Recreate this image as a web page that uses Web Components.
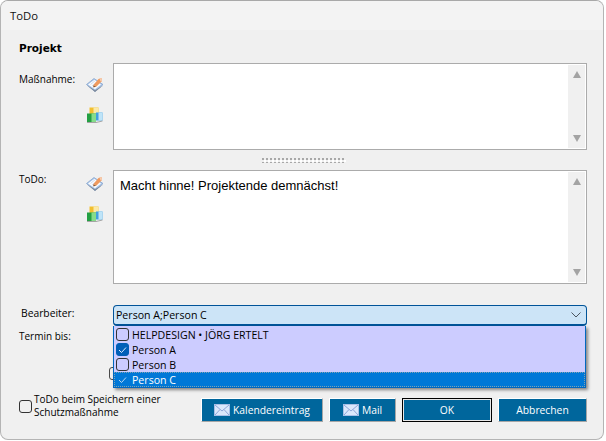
<!DOCTYPE html>
<html lang="de"><head><meta charset="utf-8"><title>ToDo</title>
<style>
html,body{margin:0;padding:0;background:#fff;}
body{font-family:"Open Sans","Noto Sans",sans-serif;}
</style></head>
<body>
<todo-window></todo-window>
<template id="t-icon-pen">
<svg width="20" height="18" viewBox="0 0 20 18"><path d="M1.500 9.500 9 3.500 18 9.500 10 16.500Z" fill="#a9c6ea" stroke="#7f9ec8" stroke-width=".7"/><path d="M3 9.500 9.500 4.800 16 9.500 10 14.300Z" fill="#fbfcfe"/><path d="M5.500 9.500 11 5M7 11 12 7" stroke="#c4d3e8" stroke-width=".8"/><path d="M8 10.500 13.500 4 16.500 3 17 6 11.500 11.500Z" fill="#ef9a5f"/><path d="M14.500 3.600 16.500 3 17 6 15.500 6.500Z" fill="#f8cdb0"/><path d="M8 10.500 11.500 11.500 8.500 12.500Z" fill="#8a5a3a"/><path d="M1.500 10 10 17 18.500 10.300 10 15.300Z" fill="#7f8c9e"/></svg>
</template>
<template id="t-icon-blocks">
<svg width="19" height="17" viewBox="0 0 19 17"><rect x="4.500" y="0.500" width="9" height="7" fill="#f2bf2e"/><rect x="8.500" y="0.500" width="5" height="7" fill="#fbe9a8"/><rect x="2" y="6.500" width="9" height="8.500" fill="#23a043"/><rect x="6.500" y="6.500" width="4.500" height="8.500" fill="#86dc8a"/><rect x="11" y="5.500" width="6.500" height="8" fill="#3f9fe0"/><rect x="13.500" y="5.500" width="4" height="8" fill="#bfe4f8"/><path d="M2 15.500H11L17.500 14" fill="none" stroke="#666" stroke-width="1" opacity=".55"/></svg>
</template>
<template id="t-mail">
<svg width="16" height="12" viewBox="0 0 16 12"><rect x=".5" y=".5" width="15" height="11" fill="#dbe7fb" stroke="#a9bfe6"/><path d="M1 1 8 7 15 1M1 11 6 5.500M15 11 10 5.500" fill="none" stroke="#8ea6d8"/></svg>
</template>
<script>
const css = s => `<style>${s}</style>`;

class MemoBox extends HTMLElement{
  connectedCallback(){
    this.attachShadow({mode:'open'}).innerHTML = css(`
      :host{display:flex;box-sizing:border-box;border:1px solid #ababab;background:#fff;height:var(--h);padding-right:1px;}
      .txt{flex:1;padding:6px 6px;font:13px/18px "Liberation Sans",Arial,sans-serif;color:#000;}
      .bar{width:17px;margin:1px 0;background:#f0f0f0;display:flex;flex-direction:column;justify-content:space-between;align-items:center;padding:6px 0;box-sizing:border-box;}
      .up,.dn{width:0;height:0;border-left:4.500px solid transparent;border-right:4.500px solid transparent;}
      .up{border-bottom:7px solid #a3a3a3;}
      .dn{border-top:7px solid #a3a3a3;}
    `)+`<div class="txt"><slot></slot></div><div class="bar"><span class="up"></span><span class="dn"></span></div>`;
  }
}
class FieldRow extends HTMLElement{
  connectedCallback(){
    const h=this.getAttribute('h'), lt=this.getAttribute('label-top'), it=this.getAttribute('icon-top');
    this.attachShadow({mode:'open'}).innerHTML = css(`
      :host{display:grid;grid-template-columns:66px 28px 474px;}
      .lbl{font-size:10px;line-height:15px;color:#000;padding-top:${lt}px;}
      .icons{display:flex;flex-direction:column;gap:14px;padding-top:${it}px;align-items:flex-start;}
      .icons svg{display:block;}
    `)+`<div class="lbl">${this.getAttribute('label')}</div>
    <div class="icons"></div>
    <memo-box style="--h:${h}px"><slot></slot></memo-box>`;
    const ic=this.shadowRoot.querySelector('.icons');
    ic.append(document.getElementById('t-icon-pen').content.cloneNode(true));
    ic.append(document.getElementById('t-icon-blocks').content.cloneNode(true));
  }
}
class SplitGrip extends HTMLElement{
  connectedCallback(){
    this.attachShadow({mode:'open'}).innerHTML = css(`
      :host{display:flex;justify-content:center;align-items:center;height:20px;width:570px;}
      i{display:block;width:84px;height:5px;background-image:radial-gradient(circle at 1px 1px,#a8a8a8 0,#a8a8a8 .8px,transparent 1px),radial-gradient(circle at 1px 1px,#fff 0,#fff .8px,transparent 1px);background-size:4px 4px,4px 4px;background-position:0 0,2px 2px;}
    `)+`<i></i>`;
  }
}
class ListItem extends HTMLElement{
  connectedCallback(){
    const checked=this.hasAttribute('checked'), act=this.hasAttribute('active');
    this.attachShadow({mode:'open'}).innerHTML = css(`
      :host{display:flex;align-items:center;gap:3px;height:15px;box-sizing:border-box;padding-left:2px;font-size:10.600px;color:${act?'#fff':'#000'};background:${act?'#0078d7':'transparent'};white-space:nowrap;${act?'outline:1px dotted rgba(255,205,140,.5);outline-offset:-1px;':''}}
      .b{flex:none;box-sizing:border-box;width:13px;height:13px;border:1px solid ${act?'transparent':(checked?'#005fb8':'#333')};border-radius:3px;background:${act?'transparent':(checked?'#005fb8':'transparent')};display:flex;align-items:center;justify-content:center;}
      svg{display:block}
    `)+`<span class="b">${checked?`<svg width="9" height="8" viewBox="0 0 9 8"><path d="M1 4 3.500 6.500 8 1.500" fill="none" stroke="${act?'#b7d6f2':'#dcecff'}" stroke-width="1"/></svg>`:''}</span><span><slot></slot></span>`;
  }
}
class ComboBox extends HTMLElement{
  connectedCallback(){
    this.attachShadow({mode:'open'}).innerHTML = css(`
      :host{display:block;position:relative;width:474px;height:21px;}
      .f{box-sizing:border-box;height:21px;background:#cce4f7;border:1px solid #005499;border-bottom-width:2px;border-radius:4px;display:flex;align-items:center;justify-content:space-between;padding:0 5px 0 2px;font-size:10.600px;color:#000;}
      .pop{position:absolute;left:0;top:21px;width:473px;box-sizing:border-box;background:#ccccff;border:1px solid #0067c0;border-top:0;padding-top:1px;box-shadow:2px 2px 3px rgba(0,0,0,.45);z-index:5;}
      svg{display:block}
    `)+`<div class="f"><span>${this.getAttribute('value')}</span><svg width="10" height="6" viewBox="0 0 10 6"><path d="M.5 .5 5 5 9.500 .5" fill="none" stroke="#4a5560"/></svg></div><div class="pop"><slot></slot></div>`;
  }
}
class ActButton extends HTMLElement{
  connectedCallback(){
    const mail=this.hasAttribute('mail'), def=this.hasAttribute('default');
    this.attachShadow({mode:'open'}).innerHTML = css(`
      :host{display:flex;box-sizing:border-box;height:24px;width:var(--w);align-items:center;justify-content:center;gap:3px;background:#00669c;color:#fff;font-size:10.300px;white-space:nowrap;
        border:1px solid;border-color:#fff #a6a6a6 #a6a6a6 #fff;${def?'border:none;outline:1px solid #000;outline-offset:-1px;box-shadow:inset 0 0 0 2px #e8e8e8;':''}}
      svg{display:block}
    `)+(mail?document.getElementById('t-mail').innerHTML:'')+`<span><slot></slot></span>`;
  }
}
class CheckField extends HTMLElement{
  connectedCallback(){
    this.attachShadow({mode:'open'}).innerHTML = css(`
      :host{display:flex;align-items:center;gap:2px;font-size:10px;line-height:13px;color:#000;}
      .b{flex:none;box-sizing:border-box;width:13px;height:13px;border:1px solid #333;border-radius:3px;}
    `)+`<span class="b"></span><span><slot></slot></span>`;
  }
}
class TodoWindow extends HTMLElement{
  connectedCallback(){
    this.attachShadow({mode:'open'}).innerHTML = css(`
      :host{display:flex;flex-direction:column;box-sizing:border-box;width:604px;height:440px;border:1px solid #b4b4b4;border-top-color:#a8a8a8;border-radius:8px;background:#f0f0f0;overflow:hidden;font-family:"Open Sans","Noto Sans",sans-serif;}
      .title{height:29px;flex:none;background:#f3f3f3;padding-left:9px;font-size:11.300px;line-height:30px;color:#111;}
      .body{flex:1;display:flex;flex-direction:column;padding:10px 0 0 18px;position:relative;}
      .proj{font:bold 10.500px/16px "DejaVu Sans",Verdana,sans-serif;height:23px;}
      .pick{display:grid;grid-template-columns:94px 474px;margin-top:21px;height:23px;}
      .pick div{font-size:10.300px;line-height:15px;padding:1px 0 0 2px;}
      .term{font-size:10px;line-height:15px;height:15px;margin-top:1px;}
      .ghost{position:absolute;left:108px;top:337px;width:13px;height:13px;box-sizing:border-box;border:1px solid #4a4a4a;border-radius:3px;}
      .foot{margin-top:auto;margin-bottom:17px;display:flex;width:568px;align-items:flex-end;}
      check-field{width:182px;margin-bottom:3px;}
      .btns{display:flex;gap:6px;}
    `)+`<div class="title">ToDo</div>
    <div class="body">
      <div class="proj">Projekt</div>
      <field-row label="Maßnahme:" h="87" label-top="9" icon-top="12"></field-row>
      <split-grip></split-grip>
      <field-row label="ToDo:" h="114" label-top="2" icon-top="4">Macht hinne! Projektende demnächst!</field-row>
      <div class="pick"><div>Bearbeiter:</div>
        <combo-box value="Person A;Person C">
          <list-item>HELPDESIGN • JÖRG ERTELT</list-item>
          <list-item checked>Person A</list-item>
          <list-item>Person B</list-item>
          <list-item checked active>Person C</list-item>
        </combo-box>
      </div>
      <div class="term">Termin bis:</div>
      <span class="ghost"></span>
      <div class="foot">
        <check-field>ToDo beim Speichern einer<br>Schutzmaßnahme</check-field>
        <div class="btns">
          <act-button mail style="--w:122px">Kalendereintrag</act-button>
          <act-button mail style="--w:67px">Mail</act-button>
          <act-button default style="--w:90px">OK</act-button>
          <act-button style="--w:89px">Abbrechen</act-button>
        </div>
      </div>
    </div>`;
  }
}
customElements.define('memo-box',MemoBox);
customElements.define('field-row',FieldRow);
customElements.define('split-grip',SplitGrip);
customElements.define('list-item',ListItem);
customElements.define('combo-box',ComboBox);
customElements.define('act-button',ActButton);
customElements.define('check-field',CheckField);
customElements.define('todo-window',TodoWindow);
</script>
</body></html>
